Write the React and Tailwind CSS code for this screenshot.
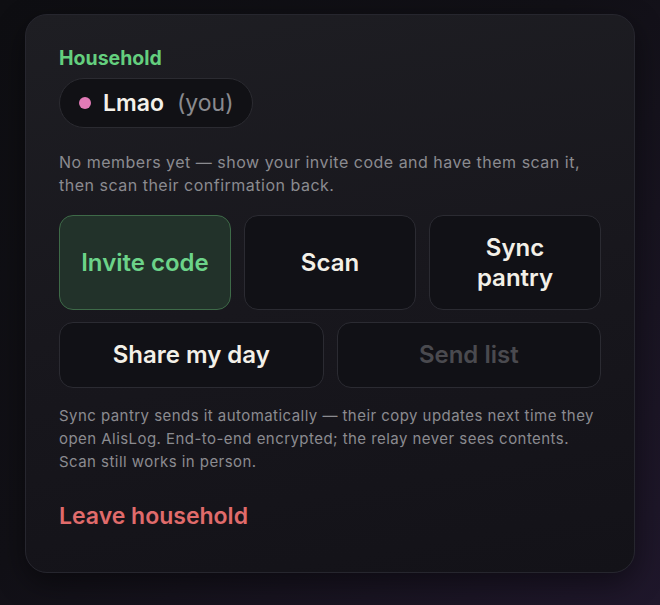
import React from "react";

const font = { fontFamily: "Inter, 'Noto Sans', 'Liberation Sans', sans-serif" };

function ActionButton({ children, variant = "default", className = "" }) {
  const styles = {
    active: "bg-[#22322a] border-[#3e6a48] text-[#6cd389]",
    default: "bg-[#111116] border-[#2b2b32] text-[#f3f0e8]",
    disabled: "bg-[#111116] border-[#2b2b32] text-[#4a4a4f]",
  };
  return (
    <button
      type="button"
      className={`flex items-center justify-center rounded-[14px] border text-[24px] font-semibold leading-[30px] text-center ${styles[variant]} ${className}`}
    >
      {children}
    </button>
  );
}

export default function App() {
  return (
    <div
      style={font}
      className="min-h-[605px] w-full bg-[linear-gradient(135deg,#0e0e12_0%,#111016_45%,#1f172b_100%)] px-[25px] pt-[14px] antialiased"
    >
      <div className="flex h-[559px] w-[610px] flex-col rounded-[22px] border border-[#26262e] bg-[linear-gradient(170deg,#1e1e23_0%,#18171d_50%,#131218_100%)] px-[33px] pt-[31px] shadow-[0_10px_30px_rgba(0,0,0,0.45)]">
        <h2 className="text-[19.5px] font-bold leading-[24px] text-[#64cf7e]">Household</h2>

        <div className="mt-[8px] flex h-[50px] w-fit items-center rounded-full border border-[#2b2b31] bg-[#111115] pl-[19px] pr-[18px]">
          <span className="h-[12px] w-[12px] rounded-full bg-[#e27bb7]" />
          <span className="ml-[12px] text-[23px] font-semibold text-[#f4f1ea]">Lmao</span>
          <span className="ml-[13px] text-[23px] text-[#8a8a8f]">(you)</span>
        </div>

        <p className="mt-[23px] text-[16px] leading-[23px] tracking-[0.5px] text-[#8b8b90]">
          No members yet — show your invite code and have them scan it,
          <br />
          then scan their confirmation back.
        </p>

        <div className="mt-[18px] grid grid-cols-3 gap-[13px]">
          <ActionButton variant="active" className="h-[95px]">Invite code</ActionButton>
          <ActionButton className="h-[95px]">Scan</ActionButton>
          <ActionButton className="h-[95px]">
            Sync
            <br />
            pantry
          </ActionButton>
        </div>

        <div className="mt-[12px] grid grid-cols-2 gap-[13px]">
          <ActionButton className="h-[66px]">Share my day</ActionButton>
          <ActionButton variant="disabled" className="h-[66px]">Send list</ActionButton>
        </div>

        <p className="mt-[16px] text-[15px] leading-[23px] tracking-[0.45px] text-[#8b8b90]">
          Sync pantry sends it automatically — their copy updates next time they
          <br />
          open AlisLog. End-to-end encrypted; the relay never sees contents.
          <br />
          Scan still works in person.
        </p>

        <button type="button" className="mt-[29px] w-fit text-left text-[23px] font-semibold leading-[28px] text-[#e06b6b]">
          Leave household
        </button>
      </div>
    </div>
  );
}
